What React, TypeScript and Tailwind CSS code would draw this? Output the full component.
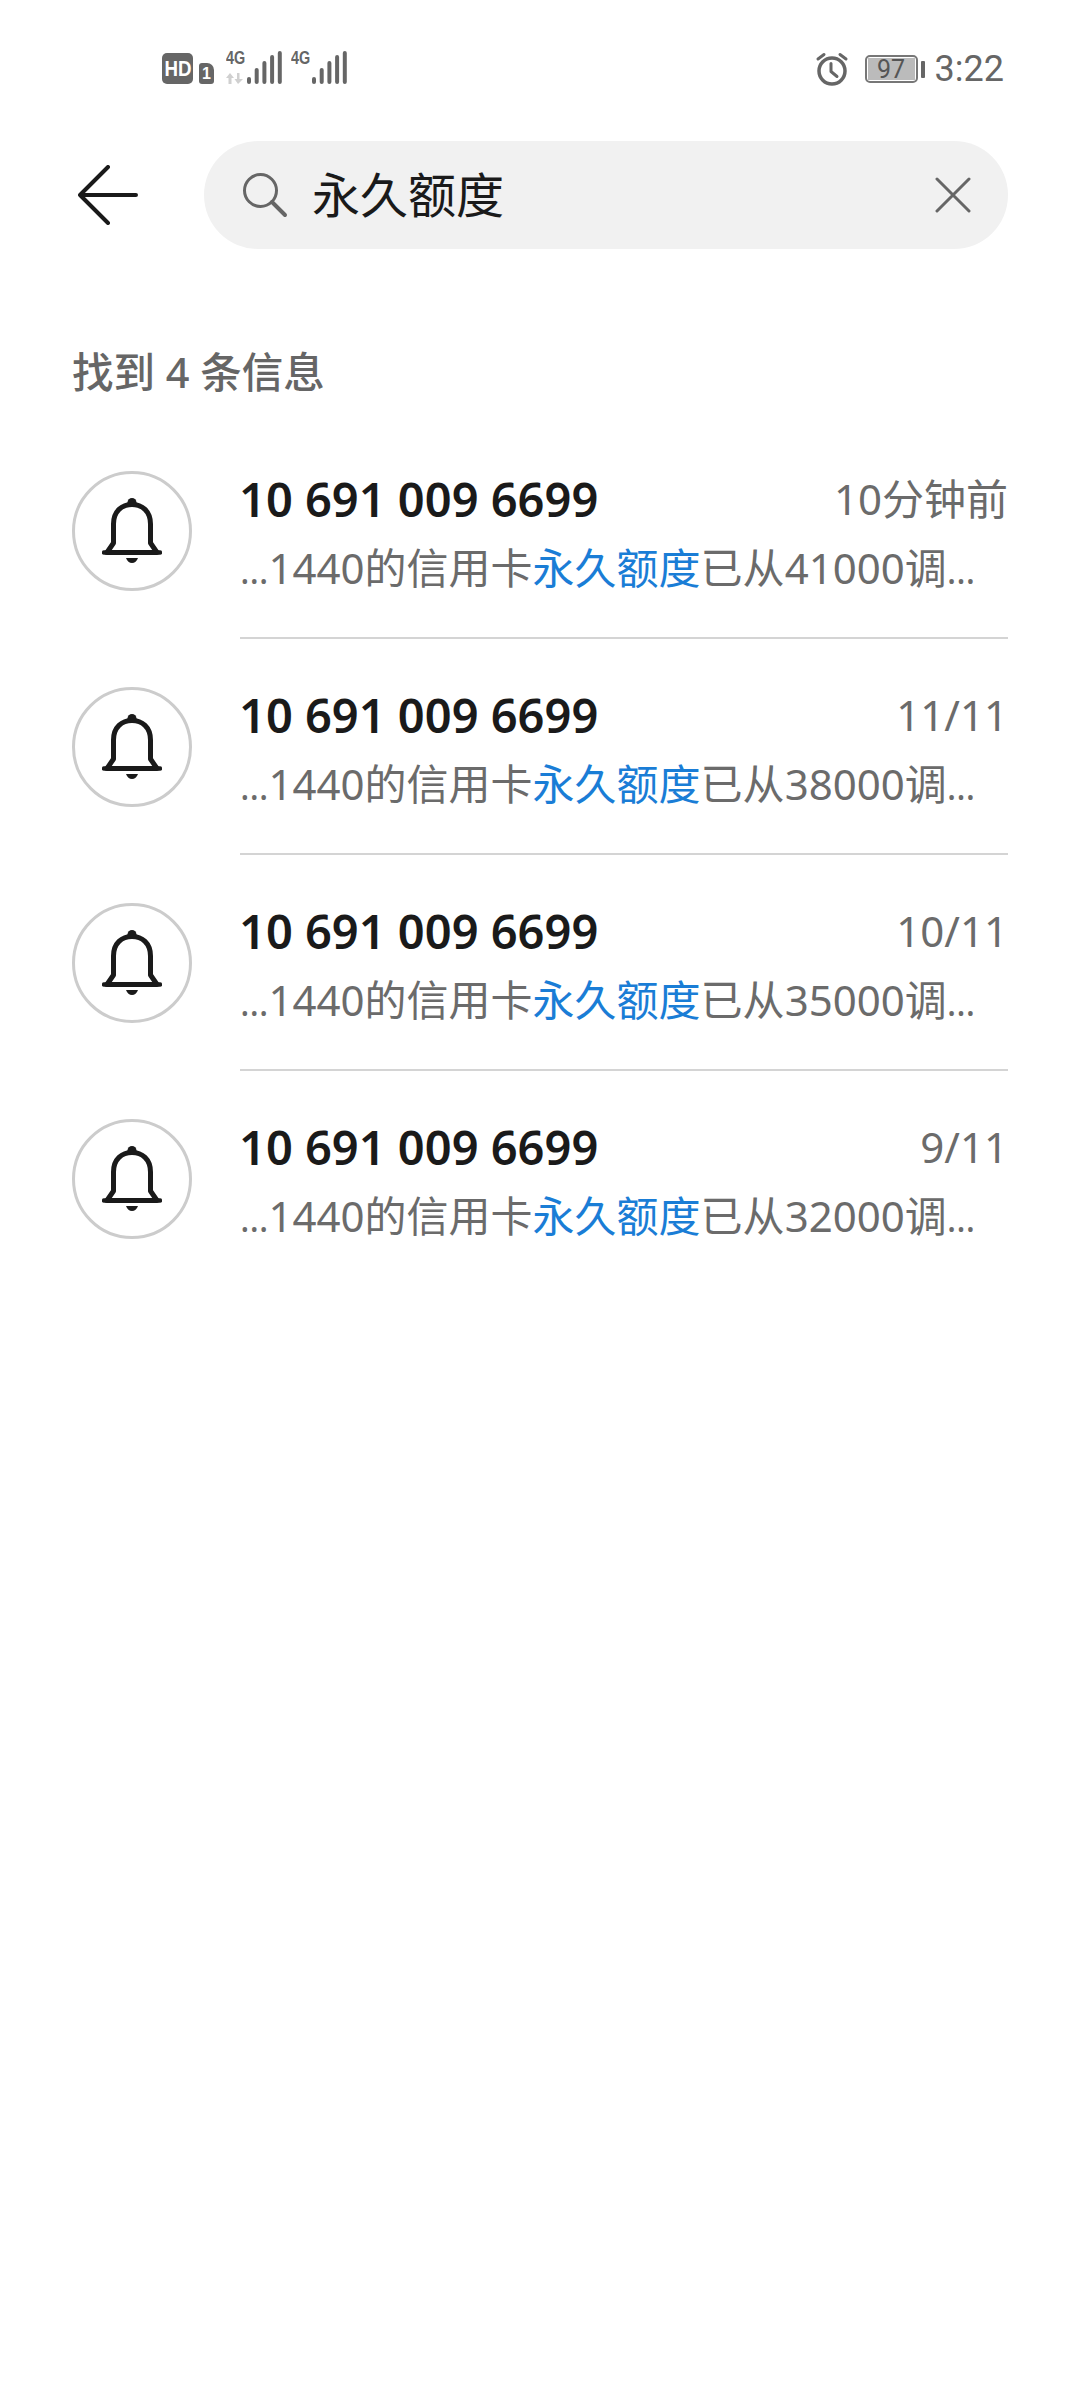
import React from 'react';

const FONT = '[font-family:"Noto_Sans","Noto_Sans_CJK_SC",sans-serif]';
const NARROW = "[font-family:'Liberation_Sans',sans-serif]";

const SignalBars = () => (
  <svg width="36" height="33" viewBox="0 0 36 33" fill="none" stroke="#666" strokeWidth="4" strokeLinecap="round">
    {[28, 19, 12, 6, 2].map((top, i) => (
      <line key={i} x1={3 + i * 7.7} x2={3 + i * 7.7} y1={top} y2={31} />
    ))}
  </svg>
);

const DataArrows = () => (
  <svg width="17" height="11" viewBox="0 0 17 11" fill="#d0d0d0">
    <path d="M4 0 8 5H5.500v6h-3V5H0ZM12 11 8.500 6H11V0h2.500v6H17Z" />
  </svg>
);

const BellIcon = () => (
  <svg width="60" height="70" viewBox="0 0 60 70" fill="none">
    <circle cx="30" cy="6.500" r="4.500" fill="#1a1a1a" />
    <path
      d="M11.500 47V28C11.500 15 20 8.500 30 8.500S48.500 15 48.500 28V47L55 56.500H5L11.500 47Z"
      stroke="#1a1a1a"
      strokeWidth="5"
      strokeLinejoin="round"
    />
    <path d="M2 56.500h56" stroke="#1a1a1a" strokeWidth="4.500" strokeLinecap="round" />
    <path d="M24 62h12c-1 3-3.500 5-6 5s-5-2-6-5Z" fill="#1a1a1a" />
  </svg>
);

const StatusBar = () => (
  <div className="flex h-[141px] items-start justify-between pl-[162px] pr-[76px] pt-[51px]">
    <div className="flex h-[33px] items-end">
      <div className="flex h-[31px] w-[31px] items-center justify-center rounded-[5px] bg-[#666]">
        <span className={`origin-center scale-x-[.85] text-[22px] font-bold leading-none text-white ${NARROW}`}>HD</span>
      </div>
      <div className="ml-[6px] flex h-[21px] w-[15px] items-center justify-center rounded-[3px] rounded-tr-[7px] bg-[#666]">
        <span className={`text-[16px] font-bold leading-none text-white ${NARROW}`}>1</span>
      </div>
      <div className="ml-[12px] flex h-[33px] w-[20px] flex-col justify-between">
        <span className={`origin-left scale-x-[.8] text-[18px] font-bold leading-[15px] text-[#666] ${NARROW}`}>4G</span>
        <DataArrows />
      </div>
      <SignalBars />
      <div className="ml-[9px] flex h-[33px] w-[20px] flex-col">
        <span className={`origin-left scale-x-[.8] text-[18px] font-bold leading-[15px] text-[#666] ${NARROW}`}>4G</span>
      </div>
      <SignalBars />
    </div>
    <div className="mt-[1px] flex h-[34px] items-center">
      <svg width="36" height="36" viewBox="0 0 36 36" fill="none" stroke="#666" strokeLinecap="round" strokeLinejoin="round">
        <circle cx="18" cy="20" r="13" strokeWidth="3.500" />
        <path d="M17 12.500v8l6 5" strokeWidth="3" />
        <path d="M4 8l6-4.500M32 8l-6-4.500" strokeWidth="3" />
      </svg>
      <div className="ml-[15px] flex h-[28px] w-[53px] items-center justify-center rounded-[5px] border-2 border-[#777] p-[1px]">
        <div className="flex h-full w-full items-center justify-center bg-[#bbb]">
          <span className="text-[25px] leading-none text-[#555] [font-family:Roboto,sans-serif]">97</span>
        </div>
      </div>
      <div className="ml-[3px] h-[17px] w-[4px] rounded-[1px] bg-[#666]" />
      <span className="ml-[10px] text-[36px] leading-none text-[#666] [font-family:Roboto,sans-serif]">3:22</span>
    </div>
  </div>
);

const SearchBar = () => (
  <div className="flex items-center pl-[78px] pr-[72px]">
    <svg width="60" height="60" viewBox="0 0 60 60" fill="none" stroke="#1a1a1a" strokeWidth="4" strokeLinecap="round" strokeLinejoin="round">
      <path d="M30 2 2 30l28 28M2 30h56" />
    </svg>
    <div className="ml-[66px] flex h-[108px] flex-1 items-center rounded-full bg-[#f1f1f1] pl-[38px] pr-[37px]">
      <svg width="46" height="46" viewBox="0 0 46 46" fill="none" stroke="#666" strokeLinecap="round">
        <circle cx="18.500" cy="18.500" r="16" strokeWidth="3" />
        <path d="M30 30l13 13" strokeWidth="4" />
      </svg>
      <span className="ml-[24px] flex-1 text-[48px] leading-none text-[#1a1a1a]">永久额度</span>
      <svg width="36" height="36" viewBox="0 0 36 36" fill="none" stroke="#666" strokeWidth="3" strokeLinecap="round">
        <path d="M2 2l32 32M34 2 2 34" />
      </svg>
    </div>
  </div>
);

const messages = [
  { time: '10分钟前', from: '41000' },
  { time: '11/11', from: '38000' },
  { time: '10/11', from: '35000' },
  { time: '9/11', from: '32000' },
];

const App = () => {
  return (
    <div className={`h-[2400px] w-[1080px] bg-white ${FONT}`}>
      <StatusBar />
      <SearchBar />
      <div className="mt-[94px] pl-[72px] text-[41.5px] font-medium leading-[58px] text-[#666]">找到 4 条信息</div>
      <div className="mt-[70px] pl-[72px] pr-[72px]">
        {messages.map((m, i) => (
          <div key={i} className="flex h-[216px] items-start">
            <div className="flex h-[120px] w-[120px] shrink-0 items-center justify-center rounded-full border-[3px] border-[#ccc]">
              <BellIcon />
            </div>
            <div className={`ml-[48px] flex h-[168px] flex-1 flex-col ${i < messages.length - 1 ? 'border-b-2 border-[#d4d4d4]' : ''}`}>
              <div className="-mt-[4px] flex items-center justify-between">
                <span className="-ml-[1px] text-[47px] font-semibold leading-[64px] text-[#1a1a1a]">10 691 009 6699</span>
                <span className="text-[42px] leading-[64px] text-[#6b6b6b]">{m.time}</span>
              </div>
              <div className="mt-[8px] text-[42px] leading-[58px] text-[#6b6b6b]">
                <span className="text-[36px]">…</span>1440的信用卡<span className="text-[#1a7dd6]">永久额度</span>已从{m.from}调<span className="text-[36px]">…</span>
              </div>
            </div>
          </div>
        ))}
      </div>
    </div>
  );
};

export default App;
